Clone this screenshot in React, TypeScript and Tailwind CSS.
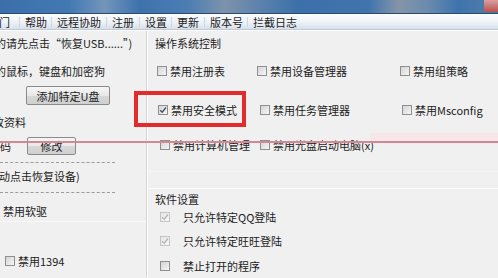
import React from "react";

function Box({ checked = false, disabled = false }: { checked?: boolean; disabled?: boolean }) {
  return (
    <span
      className={
        "relative inline-block w-[10px] h-[10px] shrink-0 border " +
        (disabled
          ? "border-[#c4c4c4] bg-[linear-gradient(135deg,#e6e6e6,#f8f8f8)]"
          : "border-[#8f8f8f] bg-[linear-gradient(135deg,#d4d4d4,#f6f6f6)]")
      }
    >
      {checked && (
        <svg className="absolute left-0 top-0" width="8" height="8" viewBox="0 0 8 8">
          <path
            d="M1.2 4.2 L3.2 6.2 L7 1.5"
            fill="none"
            stroke={disabled ? "#b4b4b4" : "#3f4f62"}
            strokeWidth="1.3"
          />
        </svg>
      )}
    </span>
  );
}

function Check({ label, checked = false, disabled = false, className = "" }: { label: string; checked?: boolean; disabled?: boolean; className?: string }) {
  return (
    <div className={"flex items-center gap-[3px] h-[12px] " + className}>
      <Box checked={checked} disabled={disabled} />
      <span>{label}</span>
    </div>
  );
}

const menu: { t: string; w: string }[] = [
  { t: "部门", w: "w-[37px]" },
  { t: "帮助", w: "w-[32px]" },
  { t: "远程协助", w: "w-[55px]" },
  { t: "注册", w: "w-[33px]" },
  { t: "设置", w: "w-[32px]" },
  { t: "更新", w: "w-[33px]" },
  { t: "版本号", w: "w-[43px]" },
  { t: "拦截日志", w: "w-[60px]" },
];

export default function App() {
  return (
    <div
      className="relative w-[498px] h-[278px] overflow-hidden bg-[#f0f0f0] text-[11px] leading-[12px] text-[#1c1c1c]"
      style={{ fontFamily: '"Noto Sans CJK SC", "Noto Sans", sans-serif' }}
    >
      {/* title bar */}
      <div className="relative h-[13px] bg-[linear-gradient(90deg,#3a6fab_0%,#4379b3_14%,#7395bb_21%,#3d72ad_28%,#4c7eb3_38%,#7d93ab_45%,#5d82ad_52%,#3b70aa_60%,#3f74ad_74%,#8495a8_80%,#6a8aae_86%,#3e73ad_92%,#4a79ab_96%)]">
        <div className="absolute right-0 top-0 w-[14px] h-[12px] bg-[linear-gradient(180deg,#d9a0a0,#b85050)]" />
      </div>
      <div className="h-[1px] bg-[#2e4a6a]" />
      {/* menu bar */}
      <div className="flex items-center h-[16px] bg-[linear-gradient(180deg,#fbfcfe_0%,#eef2f7_55%,#d7e0ea_100%)] border-b border-[#c0cad6] overflow-hidden">
        <div className="flex items-center ml-[-12px]">
          {menu.map((m, i) => (
            <div key={m.t} className={"flex items-center shrink-0 " + m.w}>
              <span>{m.t}</span>
              <span className="flex-1" />
              {i < menu.length - 1 && <span className="w-[1px] h-[10px] bg-[#cfd6de] mr-[5px]" />}
            </div>
          ))}
        </div>
      </div>
      {/* content */}
      <div className="flex h-[247px] border-t border-white">
        {/* left panel */}
        <div className="w-[146px] overflow-hidden">
          <div className="mt-[6px] h-[12px] ml-[-5px] whitespace-nowrap">的请先点击“恢复USB......”)</div>
          <div className="mt-[16px] h-[12px] ml-[-5px] whitespace-nowrap">的鼠标，键盘和加密狗</div>
          <div className="mt-[9px] ml-[26px] w-[84px] h-[19px] flex items-center justify-center border border-[#8a8a8a] rounded-[2px] bg-[linear-gradient(180deg,#f6f6f6_0%,#e8e8e8_50%,#d8d8d8_51%,#cfcfcf_100%)]">
            添加特定U盘
          </div>
          <div className="mt-[11px] h-[12px] ml-[-7px] whitespace-nowrap">改资料</div>
          <div className="mt-[8px] h-[19px] flex items-center">
            <span className="ml-[-11px] w-[22px]">密码</span>
            <div className="ml-[16px] w-[49px] h-[18px] flex items-center justify-center border border-[#8a8a8a] rounded-[2px] bg-[linear-gradient(180deg,#f6f6f6_0%,#e8e8e8_50%,#d8d8d8_51%,#cfcfcf_100%)]">
              修改
            </div>
          </div>
          <div className="mt-[7px] w-[115px] border-t border-dashed border-[#9a9a9a]" />
          <div className="mt-[7px] h-[12px] ml-[-1px] whitespace-nowrap">动点击恢复设备)</div>
          <div className="mt-[10px] w-[115px] border-t border-dashed border-[#9a9a9a]" />
          <div className="mt-[12px] h-[12px] ml-[3px]">禁用软驱</div>
          <div className="mt-[4px] h-[1px] bg-[#f8f8f8]" />
          <div className="mt-[33px] ml-[5px]">
            <Check label="禁用1394" />
          </div>
        </div>
        <div className="w-[1px] bg-[#d6d6d6]" />
        <div className="w-[1px] bg-white" />
        {/* right panel */}
        <div className="flex-1 relative">
          <div className="mt-[6px] ml-[7px] h-[12px]">操作系统控制</div>
          <div className="mt-[16px] flex">
            <Check label="禁用注册表" className="ml-[9px] w-[100px]" />
            <Check label="禁用设备管理器" className="w-[143px]" />
            <Check label="禁用组策略" />
          </div>
          <div className="mt-[27px] flex">
            <Check label="禁用安全模式" checked className="ml-[10px] w-[102px]" />
            <Check label="禁用任务管理器" className="w-[142px]" />
            <Check label="禁用Msconfig" />
          </div>
          <div className="mt-[23px] flex">
            <Check label="禁用计算机管理" className="ml-[12px] w-[100px]" />
            <Check label="禁用光盘启动电脑(x)" />
          </div>
          <div className="mt-[20px] h-[1px] bg-[#f6f6f6]" />
          <div className="mt-[16px] h-[1px] bg-[#fbfbfb]" />
          <div className="mt-[4px] ml-[7px] h-[12px]">软件设置</div>
          <div className="mt-[6px] ml-[12px] flex items-center gap-[13px] h-[12px]">
            <Box checked disabled />
            <span>只允许特定QQ登陆</span>
          </div>
          <div className="mt-[12px] ml-[12px] flex items-center gap-[13px] h-[12px]">
            <Box checked disabled />
            <span>只允许特定旺旺登陆</span>
          </div>
          <div className="mt-[13px] ml-[12px] flex items-center gap-[13px] h-[12px]">
            <Box />
            <span>禁止打开的程序</span>
          </div>
        </div>
      </div>
      {/* annotations */}
      <div className="absolute left-[370px] top-[133px] w-[128px] h-[8px] bg-[#f7e6ea]" />
      <div className="absolute left-0 top-[141px] w-[498px] h-[2px] bg-[#d48896]" />
      <div className="absolute left-[134px] top-[91px] w-[112px] h-[36px] border-[4px] border-[#e32b2b]" />
    </div>
  );
}
